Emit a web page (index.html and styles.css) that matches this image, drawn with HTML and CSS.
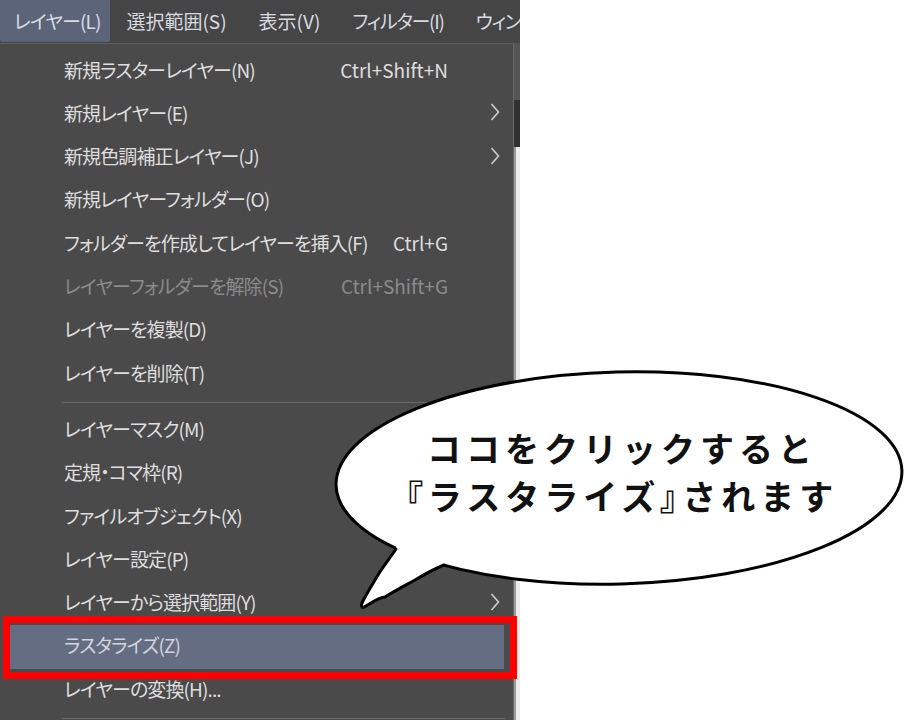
FILE: index.html
```html
<!DOCTYPE html>
<html lang="ja">

<head>
    <meta charset="UTF-8">
    <title>レイヤーメニュー</title>
    <link rel="stylesheet" href="styles.css">
</head>

<body>
    <div class="app">
        <!-- メニューバー -->
        <ul class="menubar">
            <li class="open">レイヤー(L)</li>
            <li>選択範囲(S)</li>
            <li>表示(V)</li>
            <li class="narrow">フィルター(I)</li>
            <li class="narrow">ウィンドウ(W)</li>
        </ul>

        <div class="row">
            <!-- レイヤーメニュー -->
            <ul class="menu">
                <li><span>新規ラスターレイヤー(N)</span><span class="key">Ctrl+Shift+N</span></li>
                <li><span>新規レイヤー(E)</span><span class="key"></span>
                    <svg class="arrow" viewBox="0 0 10 18"><polyline points="1.5,1 8.5,9 1.5,17" /></svg></li>
                <li><span>新規色調補正レイヤー(J)</span><span class="key"></span>
                    <svg class="arrow" viewBox="0 0 10 18"><polyline points="1.5,1 8.5,9 1.5,17" /></svg></li>
                <li><span>新規レイヤーフォルダー(O)</span></li>
                <li><span>フォルダーを作成してレイヤーを挿入(F)</span><span class="key">Ctrl+G</span></li>
                <li class="disabled"><span>レイヤーフォルダーを解除(S)</span><span class="key">Ctrl+Shift+G</span></li>
                <li><span>レイヤーを複製(D)</span></li>
                <li><span>レイヤーを削除(T)</span></li>
                <li class="sep"></li>
                <li><span>レイヤーマスク(M)</span></li>
                <li><span>定規・コマ枠(R)</span></li>
                <li><span>ファイルオブジェクト(X)</span></li>
                <li><span>レイヤー設定(P)</span></li>
                <li><span>レイヤーから選択範囲(Y)</span><span class="key"></span>
                    <svg class="arrow" viewBox="0 0 10 18"><polyline points="1.5,1 8.5,9 1.5,17" /></svg></li>
                <li class="current"><span>ラスタライズ(Z)</span></li>
                <li><span>レイヤーの変換(H)...</span></li>
                <li class="sep"></li>
            </ul>
            <!-- 後ろのウィンドウの端 -->
            <div class="edge">
                <i class="e1"></i>
                <i class="e2"></i>
                <i class="e3"></i>
            </div>
        </div>

        <!-- 吹き出し -->
        <div class="bubble">
            <svg class="balloon" viewBox="0 0 576 250">
                <ellipse cx="289" cy="114" rx="283" ry="106" transform="rotate(-1.5 289 114)" />
                <path class="tail-fill" d="M66,185 L48,211 L35,233 L31,243 L55,233 L85,216 L114,201 L114,186 L66,174 Z" />
                <path class="tail-line" d="M66,185 C60,194 52,204 48,211 C42,221 37,229 33,237 C30,243 32,245 36,242 C44,237 50,233 55,233 C66,226 76,221 85,216 C95,210 104,205 114,201" />
            </svg>
            <p class="say">ココをクリックすると</p>
            <p class="say"><span class="kakko">『</span>ラスタライズ<span class="kakko">』</span>されます</p>
        </div>
    </div>
</body>

</html>
```

FILE: styles.css
```css
* {
    margin: 0;
    padding: 0;
    list-style-type: none;
    box-sizing: border-box;
}

body {
    background-color: #fff;
    font-family: "Noto Sans CJK JP", "Noto Sans", sans-serif;
    font-feature-settings: "palt";
}

.app {
    width: 906px;
    height: 720px;
    overflow: hidden;
    /* 吹き出しの参考点 */
    position: relative;
}

/* メニューバー */
.menubar {
    width: 520px;
    height: 43px;
    display: flex;
    overflow: hidden;
    white-space: nowrap;
    background-color: #454545;
}

.menubar li {
    flex-shrink: 0;
    height: 42px;
    line-height: 41px;
    padding: 0 16px;
    font-size: 19px;
    color: #d8dbe0;
}

.menubar li.narrow {
    letter-spacing: -1.3px;
}

.menubar li.open {
    padding: 0 10px 0 14px;
    letter-spacing: -0.9px;
    background-color: #5b6478;
    border-radius: 0 0 2px 2px;
}

.row {
    display: flex;
}

/* ドロップダウン */
.menu {
    width: 514px;
    height: 677px;
    padding-top: 5.4px;
    background-color: #4a4a4a;
    border-top: 1px solid #5e5e5e;
    border-right: 1px solid #676767;
}

.menu li {
    height: 43.3px;
    padding-left: 64px;
    padding-bottom: 4px;
    display: grid;
    grid-template-columns: 1fr auto 65px;
    align-items: center;
    font-size: 19px;
    line-height: 1;
    color: #dedede;
    white-space: nowrap;
}

.menu li span {
    letter-spacing: -0.9px;
}

.menu li .key {
    text-align: right;
    letter-spacing: 0;
    font-feature-settings: normal;
}

.menu li.disabled {
    color: #8b8b8b;
}

.menu li.sep {
    height: 1px;
    margin: 6px 8px 6px 62px;
    padding: 0;
    background-color: #686868;
}

.menu li.current {
    margin: 0 9px 0 9px;
    padding-left: 55px;
    background-color: #656d83;
    color: #d2d5dc;
    position: relative;
}

/* 赤枠 */
.menu li.current::after {
    content: "";
    position: absolute;
    left: -6px;
    right: -13px;
    top: -9px;
    bottom: -10px;
    border: 7px solid #ff0000;
}

.arrow {
    width: 10px;
    height: 18px;
    margin-left: 42px;
    fill: none;
    stroke: #cfcfcf;
    stroke-width: 1.6;
}

.edge {
    width: 6px;
    display: flex;
    flex-direction: column;
}

.edge i {
    display: block;
}

.edge .e1 {
    height: 57px;
    background-color: #555;
}

.edge .e2 {
    height: 47px;
    background-color: #303030;
}

.edge .e3 {
    flex: 1;
    background-color: #ececec;
    border-left: 2px solid #9a9a9a;
}

/* 吹き出し */
.bubble {
    position: absolute;
    left: 330px;
    top: 364px;
    width: 576px;
    height: 250px;
    padding: 60px 0 0 8px;
    text-align: center;
}

.balloon {
    position: absolute;
    left: 0;
    top: 0;
    width: 576px;
    height: 250px;
}

.balloon ellipse {
    fill: #fff;
    stroke: #000;
    stroke-width: 3;
}

.balloon .tail-fill {
    fill: #fff;
}

.balloon .tail-line {
    fill: none;
    stroke: #000;
    stroke-width: 3;
    stroke-linejoin: round;
    stroke-linecap: round;
}

.say {
    position: relative;
    font-size: 34px;
    font-weight: 700;
    line-height: 48px;
    letter-spacing: 5px;
    color: #111;
    font-feature-settings: normal;
}

.kakko {
    font-feature-settings: "palt";
}
```
